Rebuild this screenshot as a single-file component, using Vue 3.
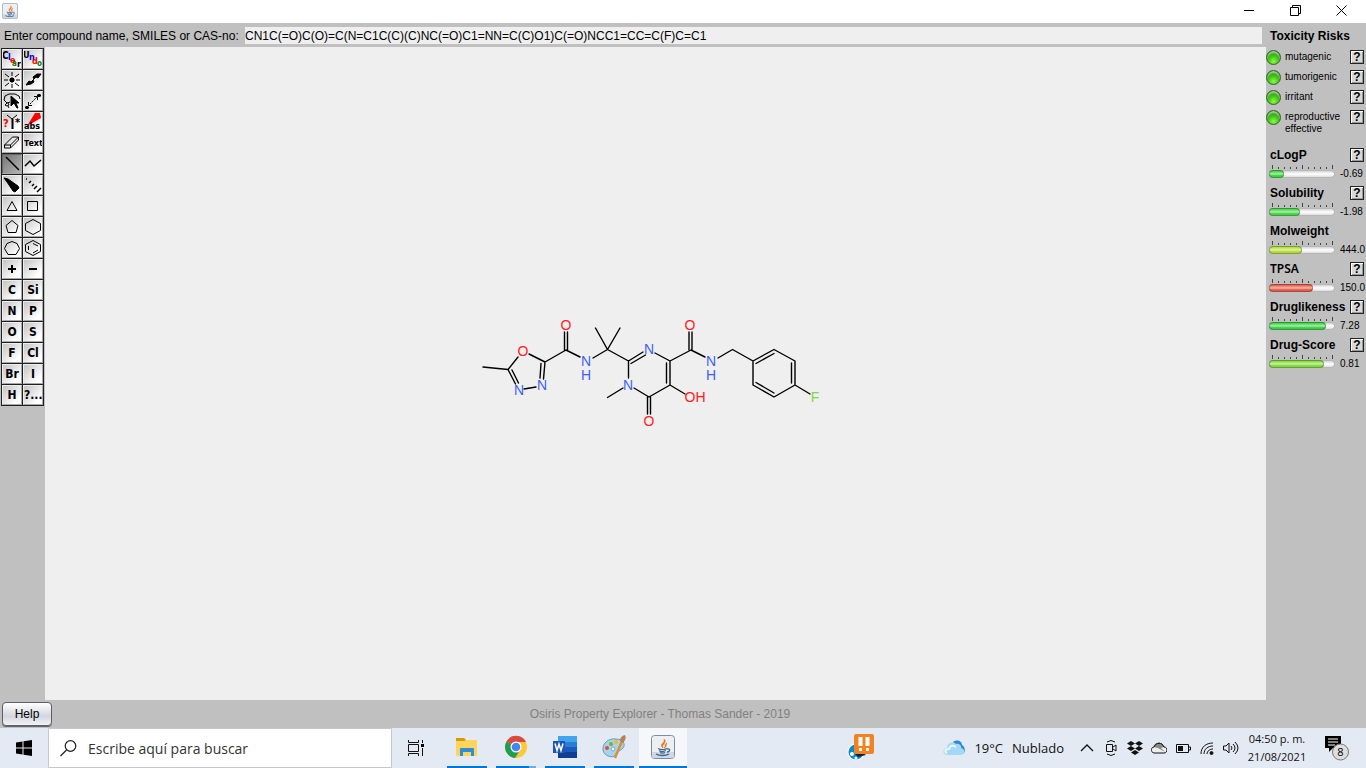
<script setup>
import { ref } from 'vue'

const smiles = ref('CN1C(=O)C(O)=C(N=C1C(C)(C)NC(=O)C1=NN=C(C)O1)C(=O)NCC1=CC=C(F)C=C1')

const tools = [
  { name: 'Clear', glyphs: [['C', 0, 10, '#000', 10], ['l', 6, 11, '#00f', 9], ['e', 8, 14, '#f00', 9], ['a', 10, 17, '#008000', 8], ['r', 15, 18, '#000', 9]] },
  { name: 'Undo', glyphs: [['U', 0, 9, '#000', 9], ['n', 6, 11, '#00f', 9], ['d', 9, 15, '#f00', 9], ['o', 14, 17, '#008000', 8]] },
  { name: 'Clean up structure', shapes: [{ d: 'M10 2v4M10 14v4M2 10h4M14 10h4M3 4l4 3M13 13l4 3M17 4l-4 3M7 13l-4 3' }, { d: 'M9 8h2l1 1v2l-1 1h-2l-1-1v-2z', fill: '#000' }] },
  { name: 'Flip', shapes: [{ d: 'M3 15l3-4 2 1 3-3-1-2 4-3h4l-3 4-2-1-3 3 1 2-3 2z', fill: '#000' }] },
  { name: 'Lasso', shapes: [{ d: 'M8 11l-3 1-3-3 1-4 4-2h6l4 2 1 3M5 12l-2 2 2 1 2-1-1-2M6 15l1 2' }, { d: 'M9 5v10l3-3 3 5h1l-2-5h3z', fill: '#000' }] },
  { name: 'Map atoms', shapes: [{ d: 'M7 13l7-7', dash: '2 1' }, { d: 'M5.500 11v3.500h3.500M11 5.500h3.500v3.500' }, { d: 'M3 15h2l1 1v1l-1 1h-2l-1-1v-1zM15 3h2l1 1v1l-1 1h-2l-1-1v-1z', fill: '#000', stroke: 'none' }] },
  { name: 'Query features', shapes: [{ d: 'M5 3l5 4 5-4' }, { d: 'M10.500 7v10', w: 2 }], glyphs: [['?', 1, 15, '#f00', 11], ['*', 13, 14, '#000', 11]] },
  { name: 'Stereo configuration', shapes: [{ d: 'M12 1h5l1 5-7 4-7 4z', fill: '#f00', stroke: 'none' }], glyphs: [['abs', 1, 17, '#000', 9]] },
  { name: 'Eraser', shapes: [{ d: 'M2.500 12l8-8h6v3l-8 8h-6zM2.500 12h6v3M8.500 12l8-8' }] },
  { name: 'Text tool', text: 'Text', small: true },
  { name: 'Single bond', active: true, shapes: [{ d: 'M4 3l13 13', w: 1.5 }] },
  { name: 'Chain', shapes: [{ d: 'M2 12l5-5 4 5 7-6', w: 1.5 }] },
  { name: 'Wedge bond', shapes: [{ d: 'M2 3l4 1 10 7 1 2-4 4-2-1-6-9z', fill: '#000' }] },
  { name: 'Hash bond', shapes: [{ d: 'M3 4h1M6 8l2-2M9 11l2-2M11 14l3-3M14 17l4-4', w: 1.5 }] },
  { name: 'Cyclopropane', shapes: [{ d: 'M5 14.5l5-9 5 9z' }] },
  { name: 'Cyclobutane', shapes: [{ d: 'M4.500 5.500h10v9h-10z' }] },
  { name: 'Cyclopentane', shapes: [{ d: 'M10 3.500l6 5-2 7H6l-2-7z' }] },
  { name: 'Cyclohexane', shapes: [{ d: 'M10 2.500l7.500 4v7l-7.500 4-7.500-4v-7z' }] },
  { name: 'Cycloheptane', shapes: [{ d: 'M10 3.500l5 2 2.500 5-3.500 6H6l-3.500-6 2.500-5z' }] },
  { name: 'Benzene', shapes: [{ d: 'M10 2.500l7.500 4v7l-7.500 4-7.500-4v-7zM10 5.500l5 2.500M15 12l-5 3M5.500 8v4' }] },
  { name: 'Positive charge', shapes: [{ d: 'M6 10h8M10 6v8', w: 2 }] },
  { name: 'Negative charge', shapes: [{ d: 'M6 10h8', w: 2 }] },
  ...['C', 'Si', 'N', 'P', 'O', 'S', 'F', 'Cl', 'Br', 'I', 'H', '?...'].map((t) => ({ name: t, text: t }))
]

const risks = ['mutagenic', 'tumorigenic', 'irritant', 'reproductive effective']

const properties = [
  { name: 'cLogP', value: '-0.69', fill: 15, color: '#3fe03f', help: true },
  { name: 'Solubility', value: '-1.98', fill: 31, color: '#48e048', help: true },
  { name: 'Molweight', value: '444.0', fill: 33, color: '#bce83c', help: false },
  { name: 'TPSA', value: '150.0', fill: 44, color: '#f0604c', help: true, alt: true },
  { name: 'Druglikeness', value: '7.28', fill: 57, color: '#3cdc46', help: true },
  { name: 'Drug-Score', value: '0.81', fill: 55, color: '#8ae43c', help: true }
]

const bonds =
  'M483 367L508 369.500L518 357M529 354L545 362L543.500 379M541 363.500L540 378M536 387L524 389M508 369.500L515.500 384M512 370L518.500 383' +
  'M545 362L566 350L580 357M564.500 350V332M567.500 350V332M593 358L607.500 349.500L595.500 328M607.500 349.500L620 328' +
  'M607.500 349.500L628.500 361L643 352M631 363.500L645.500 355M655 353L670 361V385L649 397L634 388M666.500 363V383' +
  'M628.500 361V378M623 388L607.500 397.500M647.500 397V414M650.500 397V414M670 385L685 394' +
  'M670 361L691 350L705 357M689 350V332M692 350V332M718 358L732.500 349.500L753 361' +
  'M753 361L774 349.500L795 361V385L774 397L753 385ZM756 363.500L774 353.500M791.500 363V383M756 382.500L774 393M795 385L810 394'

const atoms = [
  ['O', 566, 325, 'o'], ['O', 523, 351, 'o'], ['N', 519, 390, 'n'], ['N', 542, 385, 'n'],
  ['N', 586, 361, 'n'], ['H', 586, 375, 'n'], ['N', 649, 349, 'n'], ['N', 628, 385, 'n'],
  ['O', 649, 421, 'o'], ['OH', 695, 397, 'o'], ['O', 690, 325, 'o'], ['N', 711, 361, 'n'],
  ['H', 711, 375, 'n'], ['F', 815, 397, 'f']
]
</script>

<template>
  <div class="desktop">
    <svg class="defs" aria-hidden="true">
      <symbol id="java" viewBox="0 0 24 24">
        <rect x=".5" y=".5" width="23" height="23" rx="3" fill="#edf0f3" stroke="#7e8d9c" />
        <path d="M1 17h22v4q0 2-2 2H3q-2 0-2-2z" fill="#cdd8e3" />
        <path d="M12 13c-5-4 3-5 1-9 4 4-3 5-1 9M13 13c3-2-1-3 3-5-2 3 1 3-3 5" fill="#e87722" stroke="#e87722" stroke-width=".7" />
        <path d="M7 13.500c3 1.500 7 1 9 0M8 15.500c2 1.500 5 1 7 0M9 17.500c2 1 3 1 5 0M5 19c3 2 10 2 13 0M16 14c4-1 3 3 0 3" fill="none" stroke="#41658a" stroke-width="1.300" />
      </symbol>
    </svg>

    <header class="titlebar">
      <svg class="app-icon"><use href="#java" /></svg>
      <div class="window-buttons">
        <button type="button" aria-label="Minimizar"><svg viewBox="0 0 11 11"><path d="M0 5.500h10" /></svg></button>
        <button type="button" aria-label="Restaurar"><svg viewBox="0 0 11 11"><path d="M.5 2.500h8v8h-8zM2.500 2.500v-2h8v8h-2" /></svg></button>
        <button type="button" aria-label="Cerrar"><svg viewBox="0 0 11 11"><path d="M.5.5l10 10M10.500.5l-10 10" /></svg></button>
      </div>
    </header>

    <main class="workspace">
      <div class="editor">
        <div class="query">
          <label for="smiles">Enter compound name, SMILES or CAS-no:</label>
          <input id="smiles" v-model="smiles" type="text" spellcheck="false" />
        </div>
        <div class="drawing">
          <div class="tools">
            <button v-for="t in tools" :key="t.name" type="button" class="tool" :class="{ active: t.active, small: t.small }" :aria-label="t.name">
              <template v-if="t.text">{{ t.text }}</template>
              <svg v-else viewBox="0 0 20 20">
                <path v-for="(s, i) in t.shapes || []" :key="i" :d="s.d" :fill="s.fill || 'none'" :stroke="s.stroke || '#000'" :stroke-width="s.w || 1" :stroke-dasharray="s.dash" />
                <text v-for="(g, i) in t.glyphs || []" :key="'g' + i" :x="g[1]" :y="g[2]" :fill="g[3]" :font-size="g[4]">{{ g[0] }}</text>
              </svg>
            </button>
          </div>
          <svg class="canvas" viewBox="45 47 1221 653" role="img" aria-label="Molecule">
            <path :d="bonds" />
            <text v-for="(a, i) in atoms" :key="i" :x="a[1]" :y="a[2] + 5" :class="a[3]">{{ a[0] }}</text>
          </svg>
        </div>
      </div>

      <aside class="side">
        <h2>Toxicity Risks</h2>
        <ul class="risks">
          <li v-for="r in risks" :key="r">
            <span class="led"></span>
            <span class="risk-name">{{ r }}</span>
            <button type="button" class="help" :aria-label="'Help on ' + r">?</button>
          </li>
        </ul>
        <section v-for="p in properties" :key="p.name" class="property">
          <div class="property-head">
            <h3 :class="{ alt: p.alt }">{{ p.name }}</h3>
            <button v-if="p.help" type="button" class="help" :aria-label="'Help on ' + p.name">?</button>
          </div>
          <div class="gauge-row">
            <div class="gauge">
              <svg class="ticks" viewBox="0 0 66 5">
                <path d="M3.500 0v4M33.500 0v4M63.500 0v4M9.500 2v2M15.500 2v2M21.500 2v2M27.500 2v2M39.500 2v2M45.500 2v2M51.500 2v2M57.500 2v2" />
              </svg>
              <div class="track"><div class="fill" :style="{ width: p.fill + 'px', backgroundColor: p.color }"></div></div>
            </div>
            <span class="value">{{ p.value }}</span>
          </div>
        </section>
      </aside>
    </main>

    <footer class="statusbar">
      <button type="button" class="help-button">Help</button>
      <span>Osiris Property Explorer - Thomas Sander - 2019</span>
    </footer>

    <nav class="taskbar">
      <button type="button" class="start" aria-label="Inicio">
        <svg viewBox="0 0 16 16"><path d="M0 2.500L6.500 1.500V7.500H0zM7.500 1.300L16 0V7.500H7.500zM0 8.500H6.500V14.500L0 13.500zM7.500 8.500H16V16L7.500 14.700z" /></svg>
      </button>
      <div class="search">
        <svg viewBox="0 0 17 17"><circle cx="10.500" cy="6" r="5.300" /><path d="M6.500 10L.5 16" /></svg>
        <input type="text" aria-label="Buscar" placeholder="Escribe aquí para buscar" />
      </div>
      <button type="button" class="task taskview" aria-label="Vista de tareas">
        <svg viewBox="0 0 18 16"><path d="M1.500 0v2.500h10V0M1.500 4.500h10v7h-10zM1.500 16v-2.500h10V16M15.500 0v3M15.500 8v8" fill="none" stroke="#111" /><path d="M14 4h3v3h-3z" /></svg>
      </button>
      <button type="button" class="task open" aria-label="Explorador de archivos">
        <svg viewBox="0 0 24 24"><path d="M1 3h8l2 2h11v16H1z" fill="#ffd45c" /><path d="M1 3h8l2 2-2 1H1z" fill="#d99a00" /><path d="M5 21v-7q0-1 1-1h12q1 0 1 1v7h-3v-4H8v4z" fill="#2f8ed8" /></svg>
      </button>
      <button type="button" class="task open multi" aria-label="Google Chrome">
        <svg viewBox="0 0 24 24"><circle cx="12" cy="12" r="11" fill="#fcc934" /><path d="M12 12L2.500 6.500A11 11 0 0 0 11 23L16.500 14.500z" fill="#229b55" /><path d="M12 12L2.500 6.500A11 11 0 0 1 22 7H12z" fill="#d84b40" /><circle cx="12" cy="12" r="5.500" fill="#fff" /><circle cx="12" cy="12" r="4.300" fill="#4285f4" /></svg>
      </button>
      <button type="button" class="task open" aria-label="Word">
        <svg viewBox="0 0 24 24"><path d="M5 1h19v6H5z" fill="#41a5ee" /><path d="M5 7h19v5H5z" fill="#2b7cd3" /><path d="M5 12h19v5H5z" fill="#185abd" /><path d="M5 17h19v6H5z" fill="#103f91" /><path d="M0 6h12v12H0z" fill="#1e55b5" /><path d="M2 8.500l2 7 2-6.500 2 6.500 2-7" fill="none" stroke="#fff" stroke-width="1.500" /></svg>
      </button>
      <button type="button" class="task open" aria-label="Paint">
        <svg viewBox="0 0 24 24"><path d="M1 15C0 8 7 3 14 4c7 0 10 5 7 9-3 4-6 2-7 6-1 5-12 3-13-4z" fill="#a8d3ea" stroke="#679cb9" /><circle cx="9" cy="9" r="2" fill="#6ab63d" /><circle cx="14" cy="7" r="2" fill="#f2b72e" /><circle cx="5" cy="13" r="2" fill="#df4d48" /><circle cx="11" cy="14" r="2" fill="#f6fbff" stroke="#77a9c8" /><path d="M13 23L20 6" stroke="#de9030" stroke-width="2.500" /><path d="M18 6q0-5 5-6 2 4-2 8z" fill="#b98255" /></svg>
      </button>
      <button type="button" class="task open current" aria-label="Osiris Property Explorer"><svg><use href="#java" /></svg></button>
      <button type="button" class="alert" aria-label="Noticias">
        <svg viewBox="0 0 28 28"><circle cx="9" cy="18" r="8.500" fill="#fff" /><circle cx="9" cy="18" r="7.500" fill="#078bd0" /><path d="M8 20l8-1 3 2-8 2z" fill="#123" /><circle cx="5" cy="20" r="2" fill="#fff" /><circle cx="9" cy="24" r="1.500" fill="#fff" /><rect x="7" y="0" width="20" height="20" rx="2" fill="#f58220" /><path d="M11.500 3h4v9h-4zM18.500 3h4v9h-4zM12 14h3v3h-3zM19 14h3v3h-3z" fill="#fff" /></svg>
      </button>
      <div class="tray">
        <button type="button" class="weather">
          <svg viewBox="0 0 22 16"><path d="M10 2c4-3 9-1 9 3 3 1 4 7 1 9z" fill="#2d8bcf" /><path d="M5 15c-6 0-6-6-1-7 0-5 6-7 9-4 3-1 6 2 5 4 5 1 4 7 0 7z" fill="#a5d8f7" /><path d="M4 13c-3-1-2-4 2-4 1-4 5-4 7-2" fill="none" stroke="#e8f7ff" stroke-width="2" /></svg>
          <span>19°C</span><span>Nublado</span>
        </button>
        <button type="button" class="tray-icon" aria-label="Mostrar iconos ocultos"><svg viewBox="0 0 16 16"><path d="M2 11l6-6 6 6" stroke-width="1.300" /></svg></button>
        <button type="button" class="tray-icon" aria-label="Reunirse ahora"><svg viewBox="0 0 16 16"><path d="M3.500 4.500h6v7h-6zM10 7l3-2v6l-3-2M4 2q4-3 8 0M4 14q4 3 8 0" /></svg></button>
        <button type="button" class="tray-icon" aria-label="Dropbox"><svg viewBox="0 0 16 16"><path d="M4 1l4 2.500L4 6 0 3.500zM12 1l4 2.500L12 6 8 3.500zM4 6l4 2.500L4 11 0 8.500zM12 6l4 2.500-4 2.500-4-2.500zM8 10l4 2.500L8 15l-4-2.500z" fill="#111" stroke="none" /></svg></button>
        <button type="button" class="tray-icon" aria-label="OneDrive"><svg viewBox="0 0 16 16"><path d="M3 13C-1 12 0 7 3 7c2-5 8-5 10 0 4 0 4 6 0 6z" fill="#eee" /><path d="M2 7c2-5 9-6 11 0l-3 1 4 4-7-4z" fill="#888" stroke="none" /><path d="M3 7c2-5 8-5 10 0" /></svg></button>
        <button type="button" class="tray-icon" aria-label="Batería"><svg viewBox="0 0 16 16"><path d="M1.500 4.500h12v8h-12zM13.500 7h2v3h-2" /><path d="M3 6h5v5H3z" fill="#111" stroke="none" /></svg></button>
        <button type="button" class="tray-icon" aria-label="Red"><svg viewBox="0 0 16 16"><path d="M2 14C2 7 7 3 14 3M5 14c0-5 4-8 9-8M8 14c0-3 3-5 6-5" /><circle cx="12.500" cy="13" r="1.500" fill="#111" /></svg></button>
        <button type="button" class="tray-icon" aria-label="Volumen"><svg viewBox="0 0 16 16"><path d="M.5 6h2.500l3-3v10l-3-3H.5zM8 6q2 2 0 4M10 4q4 4 0 8M12 2q6 6 0 12" /></svg></button>
        <div class="clock"><time>04:50 p. m.</time><time>21/08/2021</time></div>
        <button type="button" class="notices" aria-label="Notificaciones">
          <svg viewBox="0 0 26 26"><path d="M1 1h16v12h-8l-4 4v-4H1z" fill="#000" /><path d="M4 4h10M4 7h10M4 10h7" stroke="#fff" fill="none" /><circle cx="16.500" cy="17" r="8" fill="#dedede" stroke="#777" /><text x="16.500" y="21">8</text></svg>
        </button>
      </div>
    </nav>
  </div>
</template>

<style>
html, body { margin: 0; }
</style>

<style scoped>
* { box-sizing: border-box; }
.desktop { display: flex; flex-direction: column; min-height: 100vh; overflow: hidden; background: #c0c0c0; color: #000; font: 12px/16px "Liberation Sans", Arial, sans-serif; }
button { padding: 0; border: 0; background: none; color: inherit; font: inherit; }
.defs { position: absolute; width: 0; height: 0; }
.titlebar { display: flex; justify-content: space-between; height: 23px; background: #fff; }
.app-icon { width: 16px; height: 16px; margin: 3px 2px; }
.window-buttons { display: flex; padding-right: 2px; }
.window-buttons button { display: flex; justify-content: center; width: 46px; padding-top: 5px; }
.window-buttons svg { width: 11px; height: 11px; fill: none; stroke: #000; }
.workspace { display: flex; flex: 1; }
.editor { display: flex; flex: 1; flex-direction: column; min-width: 0; }
.query { display: flex; align-items: center; height: 24px; padding: 0 4px; }
.query label { width: 241px; padding-top: 1px; white-space: nowrap; }
.query input { flex: 1; min-width: 0; height: 17px; padding: 1px 0 0; border: 0; outline: 0; background: #efefef; font: 12px/16px "Liberation Sans", Arial, sans-serif; color: #000; }
.drawing { display: flex; flex: 1; }
.tools { display: grid; grid-template-columns: 20px 20px; grid-auto-rows: 20px; gap: 1px; align-self: flex-start; margin: 1px; padding: 1px; background: #202020; }
.tool { overflow: hidden; border: 1px solid; border-color: #eee #a8a8a8 #a8a8a8 #eee; background: linear-gradient(135deg, #c4c4c4, #fff 80%); font: bold 12px/18px "DejaVu Sans Condensed", "DejaVu Sans", sans-serif; text-align: center; white-space: nowrap; }
.tool.small { font: bold 9px/18px "Noto Sans", sans-serif; }
.tool.active { border-color: #666 #aaa #aaa #666; background: linear-gradient(135deg, #777, #b4b4b4); }
.tool svg { display: block; width: 20px; height: 20px; margin: -1px; }
.tool text { font-family: "DejaVu Sans Condensed", "DejaVu Sans", sans-serif; font-weight: bold; }
.canvas { flex: 1; min-width: 0; background: #efefef; }
.canvas path { fill: none; stroke: #000; stroke-width: 1.4; stroke-linecap: round; stroke-linejoin: round; }
.canvas text { font-size: 14px; text-anchor: middle; }
.o { fill: #ff2020; }
.n { fill: #4060f8; }
.f { fill: #80d840; }
.side { width: 100px; padding-top: 5px; overflow: hidden; }
h2, h3 { margin: 0; font-size: 12px; line-height: 16px; font-weight: bold; }
h2 { padding-left: 4px; }
.risks { margin: 0; padding: 3px 2px 0 0; list-style: none; }
.risks li { display: flex; align-items: flex-start; height: 20px; }
.risks li:last-child { height: 40px; }
.led { flex: none; width: 15px; height: 15px; margin: 3px 4px 0 0; border: 1px solid #3c5c34; border-radius: 50%; background: radial-gradient(circle at 50% 80%, #8cff38, #3cc018 45%, #208509 80%); box-shadow: inset 0 2px 2px #a3d990; }
.risk-name { flex: 1; margin-top: 4px; font-size: 10px; line-height: 12px; }
.help { flex: none; width: 14px; height: 14px; margin-top: 3px; border: 1px solid #222; background: #d9d9d9; box-shadow: inset 1px 1px #fff, inset -1px -1px #999; font: bold 12px/12px "Liberation Sans", Arial, sans-serif; }
.property { height: 38px; padding-left: 3px; }
.property-head { display: flex; justify-content: space-between; height: 18px; padding: 0 2px 0 1px; }
.property-head .help { margin-top: 1px; }
.alt { font-family: "Noto Sans", sans-serif; font-size: 12px; font-weight: 600; }
.gauge-row { display: flex; height: 14px; }
.gauge { flex: none; width: 66px; }
.ticks { display: block; width: 66px; height: 5px; fill: none; stroke: #444; }
.track { height: 8px; border: 1px solid #b7b7b7; border-radius: 4px; background: linear-gradient(#d4d4d4, #fff 50%, #ddd); }
.fill { height: 8px; margin: -1px; border: 1px solid #0004; border-radius: 4px; background-image: linear-gradient(#0001, #fff8 50%, #0001 80%); }
.value { padding: 3px 0 0 5px; font-size: 10px; line-height: 12px; }
.statusbar { display: grid; grid-template-columns: 54px 1fr 100px; align-items: center; height: 28px; color: #808080; text-align: center; }
.help-button { width: 50px; height: 24px; margin-left: 2px; border: 1px solid #5d6068; border-radius: 4px; background: linear-gradient(#fff, #d3d6df 60%, #f2f3f7); box-shadow: 0 1px #666; color: #000; }
.taskbar { display: flex; height: 40px; background: #e3eaf3; color: #111; font-family: "Open Sans", "Noto Sans", sans-serif; }
.start { width: 48px; }
.start svg { width: 16px; height: 16px; vertical-align: middle; }
.search { display: flex; align-items: center; width: 344px; gap: 11px; padding-left: 11px; border: 1px solid #c5c8cc; background: #fff; }
.search svg { width: 17px; height: 17px; fill: none; stroke: #222; stroke-width: 1.2; }
.search input { flex: 1; min-width: 0; padding: 1px 0 0; border: 0; outline: 0; font: 14px/20px "Open Sans", "Noto Sans", sans-serif; }
.search input::placeholder { color: #333; opacity: 1; }
.task { display: flex; align-items: center; justify-content: center; width: 40px; margin-right: 9px; }
.task svg { width: 24px; height: 24px; }
.taskview { width: 48px; margin-right: 7px; }
.taskview svg { width: 18px; height: 16px; }
.open { border-bottom: 2px solid #0078d7; }
.multi { border-image: linear-gradient(90deg, #0078d7 80%, #69aee5 80%) 1; }
.current { width: 48px; margin-left: -4px; background: #f5f7fa; }
.alert { width: 28px; margin-left: auto; }
.alert svg { display: block; width: 28px; height: 28px; }
.tray { display: flex; align-items: center; margin-left: 68px; padding-right: 16px; }
.weather { display: flex; align-items: center; gap: 9px; margin-right: 11px; font-size: 13px; line-height: 20px; }
.weather svg { width: 22px; height: 18px; }
.tray-icon { width: 24px; height: 24px; }
.tray-icon svg { width: 16px; height: 16px; vertical-align: middle; fill: none; stroke: #111; }
.clock { display: grid; width: 64px; margin: 0 15px 0 2px; font-size: 11px; line-height: 18px; text-align: center; white-space: nowrap; }
.notices { width: 26px; height: 26px; }
.notices svg { display: block; width: 26px; height: 26px; }
.notices text { font-size: 11px; text-anchor: middle; }
</style>
